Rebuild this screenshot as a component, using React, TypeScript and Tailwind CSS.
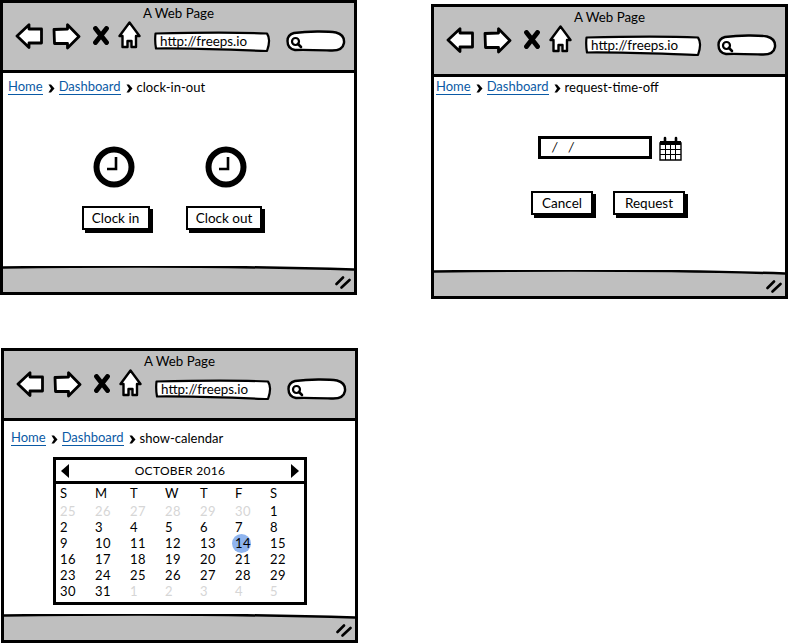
import React from "react";

const font = "font-['Lato','Noto_Sans',sans-serif]";

function BackIcon() {
  return (
    <svg width="28" height="26" viewBox="0 0 28 26" className="block">
      <path d="M2 13 L14 1.800 L14 6 L26.500 6 L26.500 20 L14 20 L14 24.500 Z" fill="#fff" stroke="#000" strokeWidth="2.800" strokeLinejoin="round" />
    </svg>
  );
}

function ForwardIcon() {
  return (
    <svg width="29" height="27" viewBox="0 0 29 27" className="block">
      <path d="M27 13.500 L15.500 1.800 L15.500 6 L2 6.500 L2.500 20.500 L15.500 20.500 L15.500 25 Z" fill="#fff" stroke="#000" strokeWidth="2.800" strokeLinejoin="round" />
    </svg>
  );
}

function StopIcon() {
  return (
    <svg width="16" height="19" viewBox="0 0 16 19" className="block">
      <path d="M2.500 2.500 L13.500 16.500 M13.500 2.500 L2.500 16.500" stroke="#000" strokeWidth="4.800" strokeLinecap="round" fill="none" />
    </svg>
  );
}

function HomeIcon() {
  return (
    <svg width="23" height="28" viewBox="0 0 23 28" className="block">
      <path d="M11.500 1.500 L21.500 15 L18 15 L18 26 L13.500 26 L13.500 20 L9.500 20 L9.500 26 L4.500 26 L4.500 15 L1.500 15 Z" fill="#fff" stroke="#000" strokeWidth="2.400" strokeLinejoin="round" />
    </svg>
  );
}

function UrlBox() {
  return (
    <div className={`relative ml-[13px] mt-[8px] h-[22px] w-[117px] pl-[6px] text-[13.400px] leading-[20px] text-black ${font}`}>
      <svg width="117" height="22" viewBox="0 0 117 22" className="absolute inset-0">
        <path d="M1.500 2.500 C40 1.500 80 1 113 2.500 C115.500 6 115.500 13 113 20 C80 19 40 17 2 17.500 C1 12 1 7 1.500 2.500 Z" fill="#fff" stroke="#000" strokeWidth="2.200" strokeLinejoin="round" />
      </svg>
      <span className="relative">http://freeps.io</span>
    </div>
  );
}

function SearchBox() {
  return (
    <div className="ml-[15px] mt-[7px]">
      <svg width="60" height="23" viewBox="0 0 60 23" className="block">
        <path d="M8 3 C22 1 42 1 50 2.500 C56 4 58.500 8 58 13 C57 19 52 21 44 20.500 C30 20 18 19.500 9 20 C3 19 1.500 15 1.500 11 C1.500 7 4 4 8 3 Z" fill="#fff" stroke="#000" strokeWidth="2.400" />
        <circle cx="9.500" cy="11.500" r="3.500" fill="none" stroke="#000" strokeWidth="2.200" />
        <path d="M12 14 L15 17" stroke="#000" strokeWidth="2.600" strokeLinecap="round" />
      </svg>
    </div>
  );
}

function Chevron() {
  return (
    <svg width="7" height="9" viewBox="0 0 7 9" className="ml-[5px] mr-[4px] mt-[2px] block shrink-0">
      <path d="M0.500 0.500 L3 0.500 L6.500 4.500 L3 8.500 L0.500 8.500 L3 4.500 Z" fill="#000" />
    </svg>
  );
}

function Crumbs({ page, className }: { page: string; className: string }) {
  return (
    <div className={`flex items-center text-[13px] leading-[16px] text-black ${font} ${className}`}>
      <span className="border-b border-[#0b5aa5] text-[#0b5aa5] leading-[15px]">Home</span>
      <Chevron />
      <span className="border-b border-[#0b5aa5] text-[#0b5aa5] leading-[15px]">Dashboard</span>
      <Chevron />
      <span>{page}</span>
    </div>
  );
}

function Frame({ className, children }: { className: string; children: React.ReactNode }) {
  return (
    <div className={`absolute flex w-[357px] flex-col border-[3px] border-black bg-white ${className}`}>
      <div className="h-[70px] shrink-0 border-b-[3px] border-black bg-[#c0c0c0]">
        <div className={`pt-[2px] text-center text-[13.300px] leading-[16px] text-black ${font}`}>A Web Page</div>
        <div className="ml-[12px] mt-[2px] flex items-start">
          <BackIcon />
          <div className="ml-[9px]"><ForwardIcon /></div>
          <div className="ml-[12px] mt-[3px]"><StopIcon /></div>
          <div className="ml-[9px] -mt-[2px]"><HomeIcon /></div>
          <UrlBox />
          <SearchBox />
        </div>
      </div>
      <div className="flex-1">{children}</div>
      <div className="relative h-[26px] shrink-0 bg-[#bfbfbf]">
        <svg width="351" height="6" viewBox="0 0 351 6" className="absolute left-0 top-0 block">
          <path d="M0 0 L351 0 L351 3 C250 0 120 0 0 1.500 Z" fill="#fff" />
          <path d="M0 1.500 C120 0 250 0.500 351 3.500" fill="none" stroke="#000" strokeWidth="2.500" />
        </svg>
        <svg width="16" height="13" viewBox="0 0 16 13" className="absolute bottom-[3px] right-[3px] block">
          <path d="M1.500 8 L8 1.500 M6.500 11.500 L14.500 4" stroke="#000" strokeWidth="2.600" strokeLinecap="round" />
        </svg>
      </div>
    </div>
  );
}

function SketchButton({ label, className }: { label: string; className: string }) {
  return (
    <div className={`flex h-[24px] items-center justify-center border-2 border-black bg-white text-[13.500px] text-black shadow-[3px_3px_0_#000] ${font} ${className}`}>
      {label}
    </div>
  );
}

function Clock({ className }: { className: string }) {
  return (
    <svg width="42" height="42" viewBox="0 0 42 42" className={`block ${className}`}>
      <circle cx="21" cy="21" r="17.500" fill="#fff" stroke="#000" strokeWidth="6" />
      <path d="M23 11 L23 23 L14 23" fill="none" stroke="#000" strokeWidth="2.600" />
    </svg>
  );
}

function CalIcon() {
  return (
    <svg width="23" height="25" viewBox="0 0 23 25" className="block">
      <path d="M1 7 H22 V24 H1 Z" fill="#fff" stroke="#000" strokeWidth="1.400" />
      <path d="M1 5 H22 V9 H1 Z" fill="#000" />
      <path d="M1 13.500 H22 M1 18.500 H22 M6.500 9 V24 M11.500 9 V24 M16.500 9 V24" stroke="#000" strokeWidth="1" />
      <path d="M6 6 V2 M17 6 V2" stroke="#000" strokeWidth="2.600" strokeLinecap="round" fill="none" />
    </svg>
  );
}

const heads = ["S", "M", "T", "W", "T", "F", "S"];
const days: { n: number; off?: boolean }[] = [
  ...[25, 26, 27, 28, 29, 30].map((n) => ({ n, off: true })),
  ...Array.from({ length: 31 }, (_, i) => ({ n: i + 1 })),
  ...[1, 2, 3, 4, 5].map((n) => ({ n, off: true })),
];

function Calendar() {
  return (
    <div className={`ml-[49px] mt-[11px] h-[148px] w-[254px] border-[3px] border-black bg-white text-black ${font}`}>
      <div className="flex h-[24px] items-center justify-between border-b-[3px] border-black px-[5px]">
        <svg width="8" height="14" viewBox="0 0 8 14" className="block"><path d="M8 0 V14 L0 7 Z" fill="#000" /></svg>
        <span className="text-[12px] tracking-[0.3px]">OCTOBER 2016</span>
        <svg width="8" height="14" viewBox="0 0 8 14" className="block"><path d="M0 0 V14 L8 7 Z" fill="#000" /></svg>
      </div>
      <div className="ml-[4px] mt-[1px] grid h-[18px] grid-cols-[repeat(7,35px)] text-[13px] leading-[16px]">
        {heads.map((h, i) => (
          <div key={i}>{h}</div>
        ))}
      </div>
      <div className="ml-[4px] grid grid-cols-[repeat(7,35px)] auto-rows-[16.1px] text-[13px] leading-[16px] tracking-[0.5px]">
        {days.map((d, i) => (
          <div key={i} className={`relative ${d.off ? "text-[#d6d6d6]" : "text-black"}`}>
            {d.n === 14 && !d.off && (
              <span className="absolute left-[-3px] top-[-1px] h-[19px] w-[19px] rounded-full bg-[#8fb4ee]" />
            )}
            <span className="relative">{d.n}</span>
          </div>
        ))}
      </div>
    </div>
  );
}

export default function App() {
  return (
    <div className="relative h-[644px] w-[788px] overflow-hidden bg-white">
      <Frame className="left-[0px] top-[0px] h-[295px]">
        <Crumbs page="clock-in-out" className="ml-[5px] mt-[6px]" />
        <div className="ml-[78px] mt-[51px] flex items-start">
          <div className="flex w-[69px] flex-col items-center">
            <Clock className="-translate-x-[2px]" />
            <SketchButton label="Clock in" className="mt-[18px] w-[68px]" />
          </div>
          <div className="ml-[36px] flex w-[76px] flex-col items-center">
            <Clock className="translate-x-[2px]" />
            <SketchButton label="Clock out" className="mt-[18px] w-[76px]" />
          </div>
        </div>
      </Frame>

      <Frame className="left-[431px] top-[4px] h-[295px]">
        <Crumbs page="request-time-off" className="ml-[2px] mt-[2px]" />
        <div className="ml-[104px] mt-[41px] flex items-start">
          <div className={`h-[23px] w-[114px] border-[3px] border-black bg-white pl-[11px] text-[13px] leading-[17px] tracking-[4px] text-black ${font}`}>
            <i>/ /</i>
          </div>
          <div className="ml-[7px]"><CalIcon /></div>
        </div>
        <div className="ml-[97px] mt-[30px] flex items-start">
          <SketchButton label="Cancel" className="w-[62px]" />
          <SketchButton label="Request" className="ml-[20px] w-[72px]" />
        </div>
      </Frame>

      <Frame className="left-[1px] top-[348px] h-[295px]">
        <Crumbs page="show-calendar" className="ml-[7px] mt-[9px]" />
        <Calendar />
      </Frame>
    </div>
  );
}
